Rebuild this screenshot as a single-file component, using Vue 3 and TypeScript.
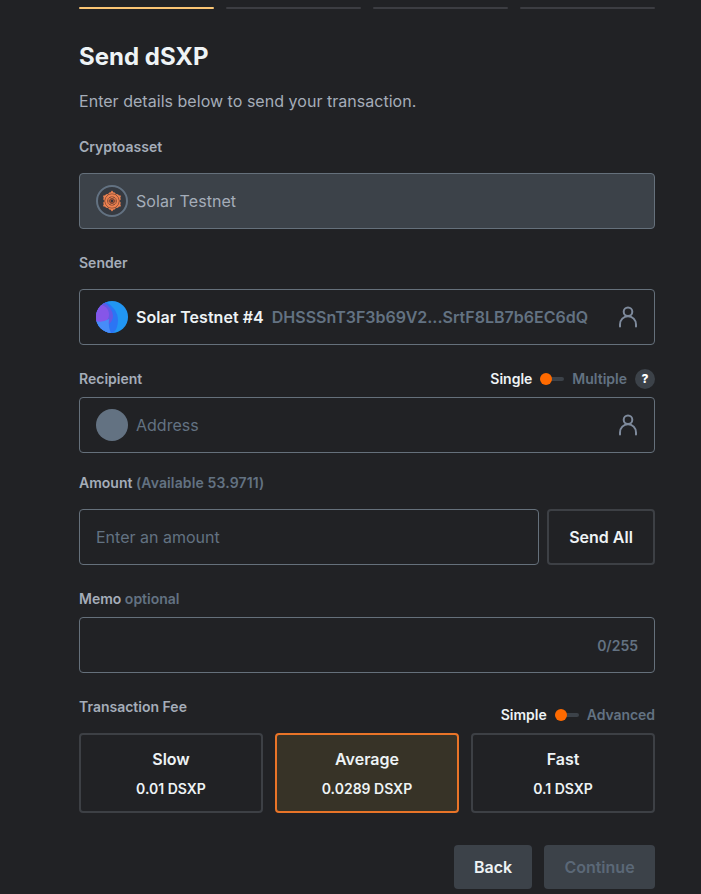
<script setup lang="ts">
import { ref } from 'vue'

interface Fee {
  label: string
  amount: string
}

const steps = 4
const activeStep = 1
const fees: Fee[] = [
  { label: 'Slow', amount: '0.01 DSXP' },
  { label: 'Average', amount: '0.0289 DSXP' },
  { label: 'Fast', amount: '0.1 DSXP' },
]
const selectedFee = ref('Average')
const recipient = ref('')
const amount = ref('')
const memo = ref('')
const petals = [0, 60, 120, 180, 240, 300]
</script>

<template>
  <main class="page">
    <div class="steps">
      <span v-for="n in steps" :key="n" class="step" :class="{ active: n <= activeStep }"></span>
    </div>

    <h1 class="title">Send dSXP</h1>
    <p class="subtitle">Enter details below to send your transaction.</p>

    <section class="field">
      <div class="label">Cryptoasset</div>
      <div class="box disabled">
        <svg class="avatar" viewBox="0 0 32 32">
          <circle cx="16" cy="16" r="15" fill="#363a41" stroke="#637282" stroke-width="2" />
          <circle cx="16" cy="16" r="8" fill="#ee8251" />
          <g v-for="a in petals" :key="a" :transform="`rotate(${a} 16 16)`">
            <path d="M11.8 10 L13.2 7.4 L14.4 7.4 L16 5.6 L17.6 7.4 L18.8 7.4 L20.2 10Z" fill="#ee8251" />
          </g>
          <g v-for="a in petals" :key="`l${a}`" :transform="`rotate(${a} 16 16)`" fill="none" stroke="#7a4532" stroke-width=".7">
            <path d="M12 9.7 Q16 7.9 20 9.7 M13.2 12.9 Q16 10.1 18.8 12.9" />
          </g>
          <circle cx="16" cy="16" r="2.5" fill="#a9583a" stroke="#5b3930" stroke-width=".8" />
          <circle cx="16" cy="16" r="1.2" fill="#35343a" />
        </svg>
        <span class="asset">Solar Testnet</span>
      </div>
    </section>

    <section class="field">
      <div class="label">Sender</div>
      <div class="box">
        <svg class="avatar" viewBox="0 0 32 32">
          <defs>
            <clipPath id="avatar-clip"><circle cx="16" cy="16" r="16" /></clipPath>
          </defs>
          <g clip-path="url(#avatar-clip)">
            <rect width="32" height="32" fill="#2196f3" />
            <path d="M0 0 H9 Q22 8 22 19 Q22 28 17 32 H0Z" fill="#2b75f4" />
            <path d="M0 0 H6 Q17 7 17 15 Q17 20 12 24 L0 22Z" fill="#6259e4" />
            <path d="M0 3 Q13 4 13 14 Q13 21 4 22 L0 20Z" fill="#8656e8" />
            <path d="M0 20 Q6 22 13 18 Q12 26 15 32 H0Z" fill="#478cf8" />
          </g>
        </svg>
        <span class="wallet">Solar Testnet #4</span>
        <span class="address">DHSSSnT3F3b69V2...SrtF8LB7b6EC6dQ</span>
        <svg class="person" viewBox="0 0 20 22"><circle cx="10" cy="5.7" r="4.3" /><path d="M2 20.5V18.5C2 13.8 5.5 10.3 10 10.3S18 13.8 18 18.5V20.5" /></svg>
      </div>
    </section>

    <section class="field compact">
      <div class="label-row">
        <div class="label">Recipient</div>
        <div class="switch">
          <span class="on">Single</span>
          <span class="toggle"><span class="knob"></span></span>
          <span>Multiple</span>
          <span class="help">?</span>
        </div>
      </div>
      <div class="box">
        <span class="avatar blank"></span>
        <input v-model="recipient" placeholder="Address" />
        <svg class="person" viewBox="0 0 20 22"><circle cx="10" cy="5.7" r="4.3" /><path d="M2 20.5V18.5C2 13.8 5.5 10.3 10 10.3S18 13.8 18 18.5V20.5" /></svg>
      </div>
    </section>

    <section class="field amount-field">
      <div class="label">Amount <span class="muted available">(Available 53.9711)</span></div>
      <div class="amount-row">
        <div class="box"><input v-model="amount" placeholder="Enter an amount" /></div>
        <button class="send-all">Send All</button>
      </div>
    </section>

    <section class="field compact">
      <div class="label">Memo <span class="muted">optional</span></div>
      <div class="box">
        <input v-model="memo" maxlength="255" />
        <span class="count">{{ memo.length }}/255</span>
      </div>
    </section>

    <section class="fee-section">
      <div class="label-row fee-head">
        <div class="label">Transaction Fee</div>
        <div class="switch">
          <span class="on">Simple</span>
          <span class="toggle"><span class="knob"></span></span>
          <span class="advanced">Advanced</span>
        </div>
      </div>
      <div class="fees">
        <button
          v-for="fee in fees"
          :key="fee.label"
          class="fee"
          :class="{ selected: fee.label === selectedFee }"
          @click="selectedFee = fee.label"
        >
          <span class="fee-name">{{ fee.label }}</span>
          <span class="fee-amount">{{ fee.amount }}</span>
        </button>
      </div>
    </section>

    <footer class="actions">
      <button class="action back">Back</button>
      <button class="action continue" disabled>Continue</button>
    </footer>
  </main>
</template>

<style>
body {
  background: #212225;
}
</style>

<style scoped>
* {
  box-sizing: border-box;
}
.page {
  width: 701px;
  height: 894px;
  padding: 7px 46px 0 79px;
  overflow: hidden;
  background: #212225;
  color: #eef3f5;
  font-family: Inter, sans-serif;
  font-size: 16px;
  line-height: 24px;
}
button,
input {
  font: inherit;
  color: inherit;
}
button {
  padding: 0;
  cursor: pointer;
}
.steps {
  display: grid;
  grid-template-columns: repeat(4, 1fr);
  gap: 12px;
}
.step {
  height: 2px;
  border-radius: 1px;
  background: #3c3d42;
}
.step.active {
  background: #fac574;
}
.title {
  margin: 32px 0 0;
  font-size: 24px;
  font-weight: 700;
  line-height: 32px;
}
.subtitle {
  margin: 16px 0 24px;
  height: 24px;
  line-height: 25px;
  letter-spacing: 0.03px;
  color: #a5adb9;
}
.field {
  display: flex;
  flex-direction: column;
  gap: 16px;
  margin-bottom: 24px;
}
.compact {
  gap: 8px;
}
.amount-field {
  margin-top: -4px;
}
.label {
  height: 20px;
  font-size: 14px;
  font-weight: 600;
  line-height: 20px;
  color: #a5adb9;
}
.muted {
  color: #637282;
}
.available {
  letter-spacing: 0.13px;
}
.label-row {
  display: flex;
  justify-content: space-between;
  align-items: center;
  height: 20px;
}
.box {
  display: flex;
  align-items: center;
  width: 100%;
  height: 56px;
  padding: 0 16px;
  border: 1px solid #65707b;
  border-radius: 4px;
}
.box.disabled {
  background: #3c4249;
}
.box input {
  flex: 1;
  min-width: 0;
  padding: 0;
  border: 0;
  outline: 0;
  background: transparent;
}
.box input::placeholder {
  color: #637282;
  opacity: 1;
}
.avatar {
  flex: none;
  width: 32px;
  height: 32px;
  margin-right: 8px;
}
.blank {
  border-radius: 50%;
  background: #637282;
}
.asset {
  letter-spacing: 0.06px;
  color: #a5adb9;
}
.wallet {
  font-weight: 600;
  letter-spacing: 0.05px;
}
.address {
  margin-left: 8px;
  font-weight: 600;
  color: #637282;
}
.person {
  flex: none;
  width: 20px;
  height: 22px;
  margin-left: auto;
  fill: none;
  stroke: #7e8a9c;
  stroke-width: 2;
  stroke-linecap: round;
}
.switch {
  display: flex;
  align-items: center;
  gap: 8px;
  font-size: 14px;
  font-weight: 600;
  line-height: 20px;
  color: #637282;
}
.on {
  color: #eef3f5;
}
.advanced {
  letter-spacing: -0.06px;
}
.toggle {
  display: flex;
  align-items: center;
  width: 24px;
  height: 4px;
  border-radius: 2px;
  background: #3c4249;
}
.knob {
  width: 12px;
  height: 12px;
  border-radius: 50%;
  background: #ff6a00;
}
.help {
  width: 20px;
  height: 20px;
  border-radius: 50%;
  background: #3c4249;
  color: #fff;
  font-size: 12px;
  font-weight: 800;
  text-align: center;
}
.amount-row {
  display: flex;
  gap: 8px;
}
.amount-row .box {
  flex: 1;
}
.send-all {
  width: 108px;
  height: 56px;
  border: 2px solid #3d4045;
  border-radius: 4px;
  background: transparent;
  font-weight: 600;
}
.count {
  padding-top: 2px;
  font-size: 14px;
  font-weight: 600;
  color: #637282;
}
.fee-head {
  height: 36px;
  align-items: flex-start;
}
.fee-head .switch {
  padding-top: 8px;
}
.fees {
  display: grid;
  grid-template-columns: repeat(3, 1fr);
  gap: 12px;
}
.fee {
  display: flex;
  flex-direction: column;
  align-items: center;
  gap: 8px;
  height: 80px;
  padding-top: 12px;
  border: 2px solid #3d4045;
  border-radius: 4px;
  background: transparent;
  font-weight: 600;
}
.fee.selected {
  border-color: #e97428;
  background: #373327;
}
.fee-amount {
  font-size: 14px;
  line-height: 20px;
}
.actions {
  display: flex;
  justify-content: flex-end;
  gap: 12px;
  margin-top: 32px;
}
.action {
  height: 44px;
  border: 0;
  border-radius: 4px;
  background: #3c4249;
  font-weight: 600;
}
.back {
  width: 78px;
}
.continue {
  width: 111px;
  color: #5b6877;
}
</style>
